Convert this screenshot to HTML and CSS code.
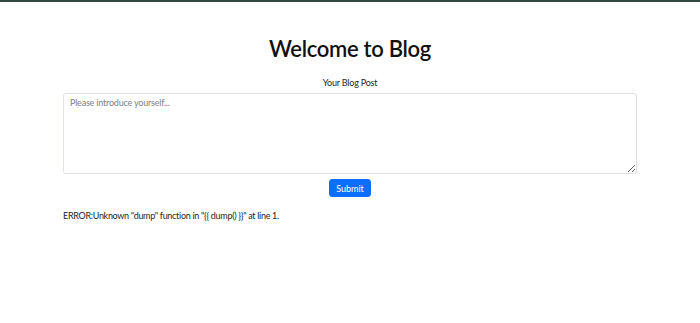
FILE: index.html
```html
<!DOCTYPE html>
<html lang="en">
<head>
  <meta charset="UTF-8" />
  <title>Blog</title>
  <link rel="stylesheet" href="styles.css">
</head>
<body>
<div class="topbar"></div>

<div class="container">
  <h1>Welcome to Blog</h1>
  <form class="post-form">
    <label for="post">Your Blog Post</label>
    <textarea id="post" placeholder="Please introduce yourself..."></textarea>
    <button type="button">Submit</button>
  </form>
  <p class="error">ERROR:Unknown "dump" function in "{{ dump() }}" at line 1.</p>
</div>
</body>
</html>
```

FILE: styles.css
```css
body {
  margin: 0;
  font-family: Lato, sans-serif;
  background: #ffffff;
  color: #212529;
}

.topbar {
  height: 2px;
  background: #2f4a40;
}

.container {
  width: 574px;
  margin: 0 auto;
  padding-top: 33px;
}

h1 {
  margin: 0 0 13px;
  text-align: center;
  font-size: 22px;
  font-weight: 600;
  line-height: 28px;
  letter-spacing: -0.3px;
  color: #111;
}

.post-form {
  display: flex;
  flex-direction: column;
  align-items: center;
}

.post-form label {
  font-size: 9px;
  line-height: 13px;
  letter-spacing: -0.2px;
  margin-bottom: 4px;
}

.post-form textarea {
  box-sizing: border-box;
  width: 100%;
  height: 81px;
  padding: 3px 6px;
  border: 1px solid #dee2e6;
  border-radius: 3px;
  font-family: inherit;
  font-size: 9px;
  letter-spacing: -0.2px;
  resize: vertical;
}

.post-form textarea::placeholder {
  color: #7a828a;
}

.post-form button {
  margin-top: 5px;
  padding: 0 6px;
  height: 18px;
  border: 1px solid #0d6efd;
  border-radius: 3px;
  background: #0d6efd;
  color: #fff;
  font-family: inherit;
  font-size: 9px;
}

.error {
  margin: 12px 0 0;
  font-size: 9px;
  line-height: 13px;
  letter-spacing: -0.3px;
}
```
